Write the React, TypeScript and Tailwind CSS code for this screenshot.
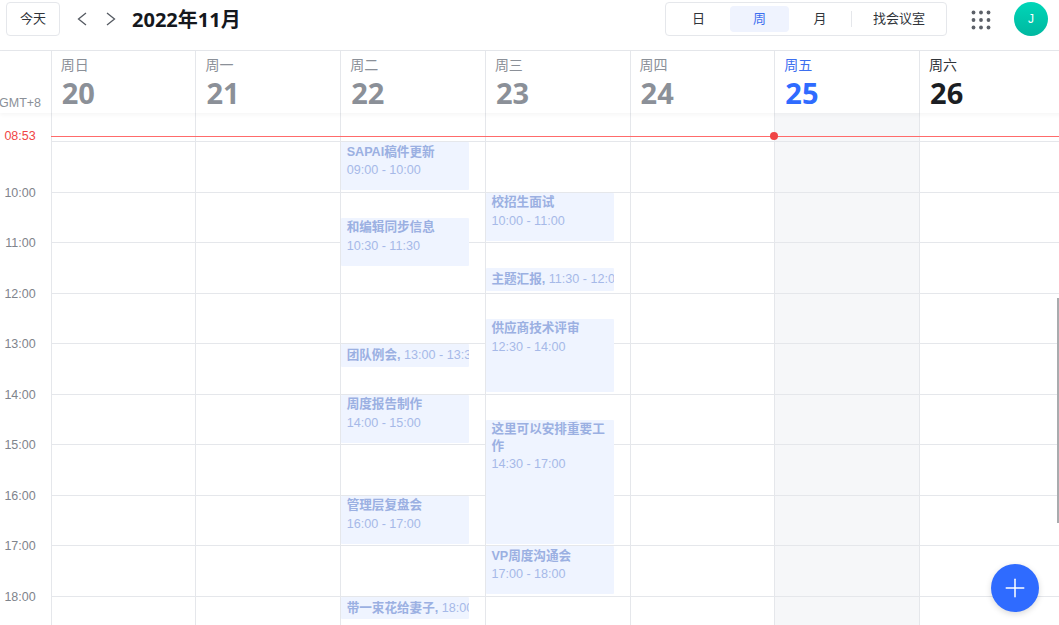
import { Plus } from "lucide-react";

const HOUR = 50.5;
const FIRST_ROW = 29.3; // part of the 8 o'clock hour still showing under the header

const days = [
  { label: "周日", date: "20" },
  { label: "周一", date: "21" },
  { label: "周二", date: "22" },
  { label: "周三", date: "23" },
  { label: "周四", date: "24" },
  { label: "周五", date: "25", today: true },
  { label: "周六", date: "26", future: true },
];

const events = [
  { day: 2, title: "SAPAI稿件更新", time: "09:00 - 10:00", start: 9, end: 10 },
  { day: 2, title: "和编辑同步信息", time: "10:30 - 11:30", start: 10.5, end: 11.5 },
  { day: 2, title: "团队例会", time: "13:00 - 13:30", start: 13, end: 13.5 },
  { day: 2, title: "周度报告制作", time: "14:00 - 15:00", start: 14, end: 15 },
  { day: 2, title: "管理层复盘会", time: "16:00 - 17:00", start: 16, end: 17 },
  { day: 2, title: "带一束花给妻子", time: "18:00 - 18:30", start: 18, end: 18.5 },
  { day: 3, title: "校招生面试", time: "10:00 - 11:00", start: 10, end: 11 },
  { day: 3, title: "主题汇报", time: "11:30 - 12:00", start: 11.5, end: 12 },
  { day: 3, title: "供应商技术评审", time: "12:30 - 14:00", start: 12.5, end: 14 },
  { day: 3, title: "这里可以安排重要工作", time: "14:30 - 17:00", start: 14.5, end: 17 },
  { day: 3, title: "VP周度沟通会", time: "17:00 - 18:00", start: 17, end: 18 },
];

const hourLabels = ["10:00", "11:00", "12:00", "13:00", "14:00", "15:00", "16:00", "17:00", "18:00"];
const rows = Array.from({ length: 11 });

function EventCard({ title, time, start, end }: { title: string; time: string; start: number; end: number }) {
  const short = end - start <= 0.5;
  return (
    <div
      className="absolute left-0 right-[15.7px] overflow-hidden rounded-[1px] bg-[#eff4ff] px-[5.5px] text-[12.6px] text-[#a6b9e8]"
      style={{ top: FIRST_ROW - 0.3 + (start - 9) * HOUR, height: (end - start) * HOUR - 2.5 }}
    >
      {short ? (
        <div className="whitespace-nowrap pt-[2px] leading-[18px]">
          <span className="font-bold text-[#9bb0e2]">{title},</span> {time}
        </div>
      ) : (
        <div className="pt-[1.5px]">
          <div className="font-bold leading-[16.5px] text-[#9bb0e2]">{title}</div>
          <div className="mt-[2px] leading-[17px]">{time}</div>
        </div>
      )}
    </div>
  );
}

export default function App() {
  return (
    <div className="relative h-screen w-screen overflow-hidden bg-white font-['Liberation_Sans','Noto_Sans_CJK_SC',sans-serif] text-[#1f2329]">
      {/* Toolbar */}
      <div className="flex h-[51px] items-start border-b border-[#e5e7eb] pt-0.5">
        <button className="ml-1.5 h-[34px] w-[54px] rounded border border-[#e5e7eb] text-[13px] text-[#30343a]">今天</button>
        <svg width="10" height="14" viewBox="0 0 10 14" fill="none" stroke="#555a62" strokeWidth="1.3" className="ml-[16.5px] mt-2.5">
          <path d="M9 1 1.5 7 9 13" />
        </svg>
        <svg width="10" height="14" viewBox="0 0 10 14" fill="none" stroke="#555a62" strokeWidth="1.3" className="ml-[19.5px] mt-2.5">
          <path d="M1 1 8.5 7 1 13" />
        </svg>
        <h1 className="ml-4 mt-1 text-[20px] font-bold leading-7 text-[#15181d] font-['Noto_Sans','Noto_Sans_CJK_SC',sans-serif]">2022年11月</h1>

        <div className="ml-auto flex h-[34px] w-[282px] items-center rounded border border-[#e5e7eb] pl-[5px] text-[13px] text-[#30343a]">
          <span className="w-[59px] pr-1 text-center">日</span>
          <span className="h-[26px] w-[59px] rounded bg-[#eff3fe] text-center leading-[26px] text-[#3d6fef]">周</span>
          <span className="w-[62px] text-center">月</span>
          <span className="h-4 w-px bg-[#e5e7eb]" />
          <span className="ml-[21px]">找会议室</span>
        </div>

        <svg width="20" height="20" viewBox="0 0 20 20" className="ml-6 mt-2 text-[#5c6068]" fill="currentColor">
          {[2.5, 10, 17.5].map((cy) =>
            [2.5, 10, 17.5].map((cx) => <circle key={`${cx}-${cy}`} cx={cx} cy={cy} r="1.9" />)
          )}
        </svg>

        <div className="ml-[23px] mr-[11px] flex h-[34px] w-[34px] items-center justify-center rounded-full bg-gradient-to-b from-[#00d6b8] to-[#00b8a0] text-xs text-white">
          J
        </div>
      </div>

      {/* Day header */}
      <div className="relative z-10 flex h-[62px] w-[1063.8px] bg-white shadow-[0_2px_4px_rgba(0,0,0,0.04)]">
        <div className="w-[50.7px] shrink-0 pt-[44px] text-[12.5px] leading-4 text-[#8b9098]">
          <span className="-ml-px">GMT+8</span>
        </div>
        <div className="grid flex-1 grid-cols-7">
          {days.map((d) => (
            <div key={d.date} className="border-l border-[#e5e7eb] pl-[9px] pt-[5px]">
              <div
                className={`text-sm leading-[18px] ${d.today ? "text-[#3d6fef]" : d.future ? "text-[#30343a]" : "text-[#8b9098]"}`}
              >
                {d.label}
              </div>
              <div
                className={`ml-px pt-px text-[29px] font-bold leading-9 font-['Noto_Sans',sans-serif] ${d.today ? "text-[#2f6bff]" : d.future ? "text-[#1b1e23]" : "text-[#8b9098]"}`}
              >
                {d.date}
              </div>
            </div>
          ))}
        </div>
      </div>

      {/* Time grid */}
      <div className="flex w-[1063.8px]">
        <div className="w-[50.7px] shrink-0 pr-[15px] text-right text-[12.5px] leading-4 text-[#7f848c]">
          <div className="pt-[15px] text-[#f04545]">08:53</div>
          <div className="h-[40.7px]" />
          {hourLabels.map((h) => (
            <div key={h} className="h-[50.5px]">
              {h}
            </div>
          ))}
        </div>
        <div className="grid flex-1 grid-cols-7">
          {days.map((d, i) => (
            <div key={d.date} className={`relative border-l border-[#e5e7eb] ${d.today ? "bg-[#f6f7f9]" : ""}`}>
              <div className="h-[29.3px] border-b border-[#e5e7eb]" />
              {rows.map((_, r) => (
                <div key={r} className="h-[50.5px] border-b border-[#e5e7eb]" />
              ))}
              {events
                .filter((e) => e.day === i)
                .map((e) => (
                  <EventCard key={e.title} title={e.title} time={e.time} start={e.start} end={e.end} />
                ))}
            </div>
          ))}
        </div>
      </div>

      {/* Current time line */}
      <div className="absolute left-[51px] right-0 top-[135.5px] z-10 h-px bg-[#ff6b6b]" />
      <div className="absolute left-[770px] top-[132px] z-10 h-2 w-2 rounded-full bg-[#f04545]" />

      {/* Scrollbar */}
      <div className="absolute right-0 top-[298px] z-20 h-[225px] w-0.5 bg-[#a9abae]" />

      {/* New event */}
      <button className="absolute left-[991px] top-[564px] z-20 flex h-12 w-12 items-center justify-center rounded-full bg-[#2f6bff] text-white shadow-[0_2px_6px_rgba(0,0,0,0.15)]">
        <Plus size={30} strokeWidth={1.2} />
      </button>
    </div>
  );
}
